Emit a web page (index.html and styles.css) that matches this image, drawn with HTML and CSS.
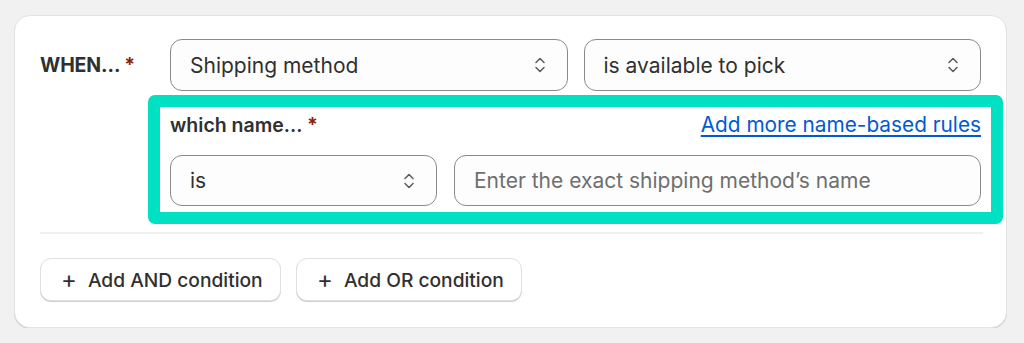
FILE: index.html
```html
<!DOCTYPE html>
<html>
<head>
<meta charset="utf-8">
<link rel="stylesheet" href="styles.css">
</head>
<body>
<div class="card">
  <div class="when-row">
    <div class="when-label">WHEN... <span class="req">*</span></div>
    <div class="when-body">
      <div class="selects">
        <div class="select"><span>Shipping method</span>
          <svg class="chev" viewBox="0 0 12 20" width="12" height="20"><path d="M2 7.5 6 3.5 10 7.5M2 12.5 6 16.5 10 12.5" fill="none" stroke="#5a5a5a" stroke-width="1.5" stroke-linecap="round" stroke-linejoin="round"/></svg>
        </div>
        <div class="select"><span>is available to pick</span>
          <svg class="chev" viewBox="0 0 12 20" width="12" height="20"><path d="M2 7.5 6 3.5 10 7.5M2 12.5 6 16.5 10 12.5" fill="none" stroke="#5a5a5a" stroke-width="1.5" stroke-linecap="round" stroke-linejoin="round"/></svg>
        </div>
      </div>
      <div class="sub">
        <div class="sub-head">
          <div class="sub-label">which name... <span class="req">*</span></div>
          <a class="link" href="#">Add more name-based rules</a>
        </div>
        <div class="sub-row">
          <div class="select small"><span>is</span>
            <svg class="chev" viewBox="0 0 12 20" width="12" height="20"><path d="M2 7.5 6 3.5 10 7.5M2 12.5 6 16.5 10 12.5" fill="none" stroke="#5a5a5a" stroke-width="1.5" stroke-linecap="round" stroke-linejoin="round"/></svg>
          </div>
          <div class="input">Enter the exact shipping method’s name</div>
        </div>
      </div>
    </div>
  </div>
  <div class="divider"></div>
  <div class="actions">
    <button class="btn"><span class="plus">+</span>Add AND condition</button>
    <button class="btn"><span class="plus">+</span>Add OR condition</button>
  </div>
</div>
</body>
</html>
```

FILE: styles.css
```css
* { box-sizing: border-box; }
html, body { margin: 0; padding: 0; }
body {
  background: #f1f1f1;
  font-family: Inter, "Noto Sans", sans-serif;
  color: #303030;
  padding: 15px 17px 0 14px;
}
.card {
  background: #fff;
  border: 1px solid #e3e3e3;
  border-radius: 16px;
  box-shadow: 0 1px 0 #d0d0d0;
  padding: 23px 25px 25px 25px;
  height: 313px;
}
.when-row {
  display: flex;
}
.when-label {
  width: 130px;
  flex: none;
  font-weight: 700;
  font-size: 19.5px;
  line-height: 52px;
  color: #303030;
  letter-spacing: -0.1px;
}
.req { color: #8e1f0b; font-weight: 700; }
.when-body { flex: 1; }
.selects {
  display: flex;
  gap: 16px;
}
.select, .input {
  flex: 1;
  height: 52px;
  border: 1px solid #8a8a8a;
  border-radius: 12px;
  background: #fdfdfd;
  display: flex;
  align-items: center;
  justify-content: space-between;
  padding: 0 21px 0 19px;
  font-size: 21px;
  color: #303030;
}
.chev { flex: none; }
.sub {
  margin: 4px -22px 0 -22px;
  border: 12px solid #00e1c4;
  border-radius: 7px;
  padding: 1px 10px 6px 10px;
}
.sub-head {
  display: flex;
  justify-content: space-between;
  align-items: center;
  height: 33px;
  margin-bottom: 14px;
}
.sub-label {
  font-size: 19.5px;
  font-weight: 600;
  color: #303030;
}
.link {
  color: #005bd3;
  font-size: 20.8px;
  text-decoration: underline;
  text-underline-offset: 3px;
}
.sub-row {
  display: flex;
  gap: 17px;
}
.select.small {
  flex: none;
  width: 267px;
  height: 51px;
}
.input {
  height: 51px;
  color: #6f6f6f;
}
.divider {
  height: 2px;
  background: #efefef;
  margin: 8px -2px 0 0;
}
.actions {
  display: flex;
  gap: 15px;
  margin-top: 24px;
}
.btn {
  font-family: inherit;
  height: 43px;
  width: 241px;
  border: 1px solid #e1e1e1;
  border-radius: 11px;
  background: #fff;
  box-shadow: 0 1px 0 #cfcfcf;
  font-size: 19.2px;
  font-weight: 500;
  color: #303030;
  padding: 0 0 0 20px;
  display: flex;
  align-items: center;
}
.btn + .btn { width: 226px; }
.plus {
  font-size: 24px;
  font-weight: 400;
  margin-right: 11px;
  line-height: 1;
}
```
